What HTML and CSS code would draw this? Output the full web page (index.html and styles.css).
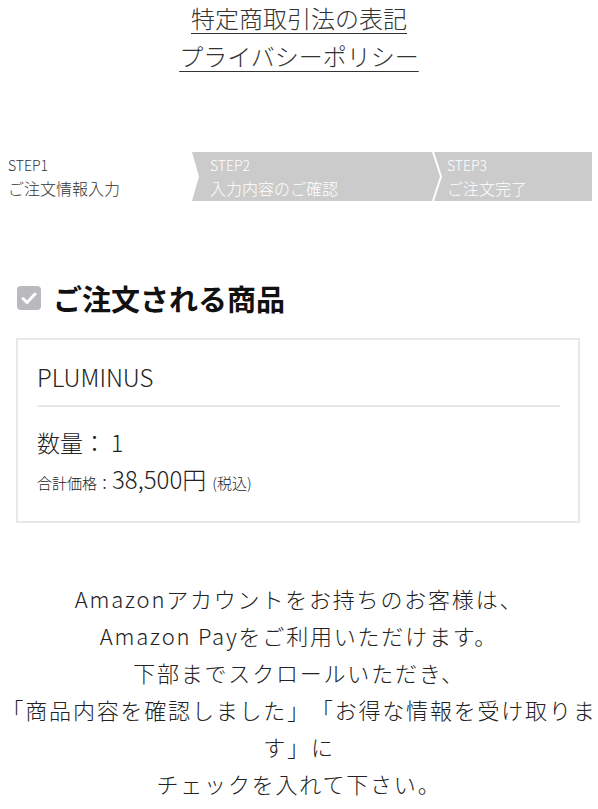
FILE: index.html
```html
<!DOCTYPE html>
<html lang="ja">
<head>
    <meta charset="UTF-8">
    <meta name="viewport" content="width=device-width, initial-scale=1.0">
    <title>ご注文情報入力</title>
    <link rel="stylesheet" href="styles.css">
</head>
<body>
    <div class="links">
        <a href="#">特定商取引法の表記</a>
        <a href="#">プライバシーポリシー</a>
    </div>

    <ol class="steps">
        <li class="step current">
            <span class="step-no">STEP1</span>
            <span class="step-name">ご注文情報入力</span>
        </li>
        <li class="step middle">
            <span class="step-no">STEP2</span>
            <span class="step-name">入力内容のご確認</span>
        </li>
        <li class="step last">
            <span class="step-no">STEP3</span>
            <span class="step-name">ご注文完了</span>
        </li>
    </ol>

    <h2 class="section-title">
        <span class="check-icon">
            <svg viewBox="0 0 24 24" width="24" height="24">
                <rect x="0" y="0" width="24" height="24" rx="4" fill="#b9b9be"/>
                <path d="M6 12.5l4 4 8-8.5" fill="none" stroke="#fff" stroke-width="3" stroke-linecap="round" stroke-linejoin="round"/>
            </svg>
        </span>
        ご注文される商品
    </h2>

    <div class="item-box">
        <div class="item-name">PLUMINUS</div>
        <div class="item-qty">数量： 1</div>
        <div class="item-price">
            <span class="label">合計価格：</span><span class="price">38,500円</span><span class="tax">(税込)</span>
        </div>
    </div>

    <p class="notice">
        Amazonアカウントをお持ちのお客様は、<br>
        Amazon Payをご利用いただけます。<br>
        下部までスクロールいただき、<br>
        「商品内容を確認しました」「お得な情報を受け取ります」に<br>
        チェックを入れて下さい。
    </p>
</body>
</html>
```

FILE: styles.css
```css
body {
    margin: 0;
    font-family: "Noto Sans CJK JP", "Noto Sans", sans-serif;
    font-weight: 300;
    color: #222;
    background: #fff;
    text-spacing-trim: space-all;
}

.links {
    display: flex;
    flex-direction: column;
    align-items: center;
    margin-top: -1px;
    font-size: 24px;
    line-height: 38px;
}
.links a {
    color: #333;
    text-decoration: underline;
    text-underline-offset: 5px;
    text-decoration-thickness: 1px;
}

.steps {
    list-style: none;
    display: flex;
    margin: 77px 6px 0 8px;
    padding: 0;
    height: 49px;
}
.step {
    display: flex;
    flex-direction: column;
    justify-content: center;
    line-height: 23px;
}
.step-no {
    font-size: 14px;
}
.step-name {
    font-size: 16px;
}
.current {
    width: 184px;
    color: #333;
}
.middle {
    width: 230px;
    padding-left: 18px;
    background: #cbcbcb;
    color: #fff;
    clip-path: polygon(0 0, calc(100% - 8px) 0, 100% 50%, calc(100% - 8px) 100%, 0 100%, 7px 50%);
}
.last {
    flex: 1;
    margin-left: -6px;
    padding-left: 13px;
    background: #cbcbcb;
    color: #fff;
    clip-path: polygon(0 0, 100% 0, 100% 100%, 0 100%, 8px 50%);
}

.section-title {
    display: flex;
    align-items: center;
    gap: 12px;
    margin: 82px 0 0 17px;
    font-size: 29px;
    font-weight: 700;
    color: #111;
    line-height: 30px;
}
.check-icon {
    display: flex;
}

.item-box {
    margin: 25px 18px 0 16px;
    padding: 19px 18px 19px 19px;
    border: 2px solid #e8e8e8;
}
.item-name {
    font-size: 24px;
    line-height: 36px;
    padding-bottom: 10px;
    border-bottom: 2px solid #e8e8e8;
}
.item-qty {
    margin-top: 17px;
    font-size: 23px;
    line-height: 36px;
}
.item-price {
    display: flex;
    align-items: baseline;
    line-height: 38px;
}
.item-price .label {
    font-size: 15px;
}
.item-price .price {
    font-size: 24px;
}
.item-price .tax {
    font-size: 15px;
    margin-left: 6px;
}

.notice {
    margin: 57px 0 0;
    padding: 0;
    text-align: center;
    font-size: 22px;
    line-height: 37px;
    letter-spacing: 1.8px;
    color: #222;
}
```
